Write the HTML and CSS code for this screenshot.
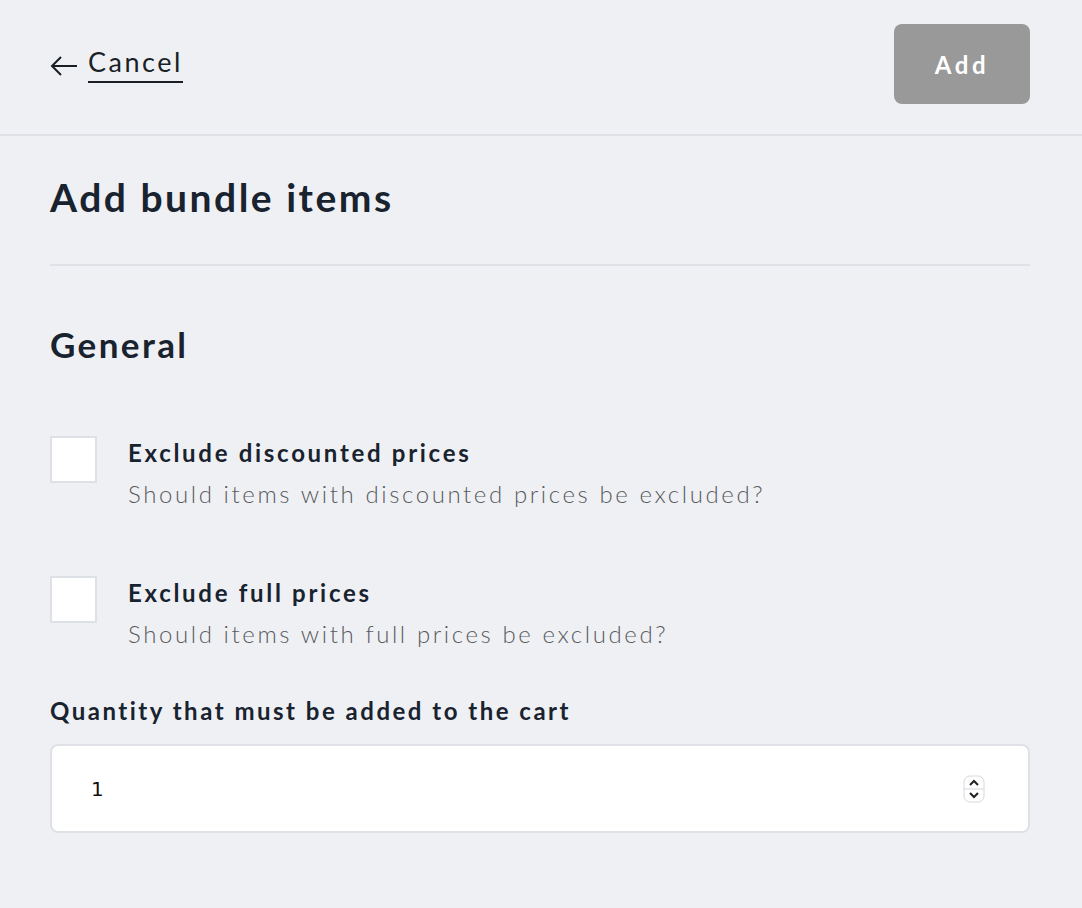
FILE: index.html
```html
<!DOCTYPE html>
<html>
<head>
  <title>Add bundle items</title>
  <meta name="viewport" content="width=device-width, initial-scale=1.0">
  <link rel="stylesheet" href="styles.css">
</head>
<body>
  <header class="top-bar">
    <a class="cancel" href="#">
      <svg class="cancel-arrow" width="28" height="20" viewBox="0 0 28 20">
        <path d="M27 10H2M11 1L2 10l9 9" fill="none" stroke="#1a1f26" stroke-width="2"/>
      </svg>
      <span class="cancel-text">Cancel</span>
    </a>
    <button class="add-btn" disabled>Add</button>
  </header>

  <main class="content">
    <h1 class="page-title">Add bundle items</h1>

    <section class="section">
      <h2 class="section-title">General</h2>

      <label class="check-row">
        <span class="check-box"></span>
        <span class="check-text">
          <span class="check-label">Exclude discounted prices</span>
          <span class="check-help">Should items with discounted prices be excluded?</span>
        </span>
      </label>

      <label class="check-row">
        <span class="check-box"></span>
        <span class="check-text">
          <span class="check-label">Exclude full prices</span>
          <span class="check-help">Should items with full prices be excluded?</span>
        </span>
      </label>

      <div class="field">
        <label class="field-label" for="quantity">Quantity that must be added to the cart</label>
        <div class="number-input">
          <input type="text" id="quantity" value="1">
          <span class="spinner">
            <svg width="22" height="28" viewBox="0 0 22 28">
              <rect x="1" y="1" width="20" height="26" rx="6" fill="#fff" stroke="#d6d8dd"/>
              <line x1="1" y1="14" x2="21" y2="14" stroke="#d6d8dd"/>
              <path d="M7 10l4-4 4 4M7 18l4 4 4-4" fill="none" stroke="#222" stroke-width="2"/>
            </svg>
          </span>
        </div>
      </div>
    </section>
  </main>
</body>
</html>
```

FILE: styles.css
```css
body {
  margin: 0;
  background-color: #eff0f4;
  color: #18232f;
  font-family: Lato, "Noto Sans", sans-serif;
}

.top-bar {
  display: flex;
  align-items: center;
  justify-content: space-between;
  height: 136px;
  padding: 0 52px 0 50px;
  border-bottom: 2px solid #dfe1e6;
  box-sizing: border-box;
}

.cancel {
  display: flex;
  align-items: center;
  gap: 10px;
  text-decoration: none;
  color: #1a1f26;
  margin-top: -6px;
}

.cancel-text {
  font-size: 27px;
  letter-spacing: 2.5px;
  padding-bottom: 3px;
  border-bottom: 2px solid #1a1f26;
}

.cancel-arrow {
  margin-top: 4px;
}

.add-btn {
  width: 136px;
  height: 80px;
  margin-top: -6px;
  border: none;
  border-radius: 8px;
  background-color: #999;
  color: #fff;
  font-family: Lato, "Noto Sans", sans-serif;
  font-size: 24px;
  font-weight: bold;
  letter-spacing: 3.6px;
  padding-left: 6px;
}

.content {
  padding: 0 52px 0 50px;
}

.page-title {
  margin: 0;
  padding: 38px 0 44px;
  font-size: 39px;
  font-weight: bold;
  letter-spacing: 2.5px;
  border-bottom: 2px solid #dfe1e6;
}

.section-title {
  margin: 57px 0 0;
  font-size: 35px;
  font-weight: bold;
  letter-spacing: 2.4px;
}

.check-row {
  display: flex;
  gap: 31px;
  margin-top: 69px;
}

.check-row + .check-row {
  margin-top: 66px;
}

.check-box {
  flex: none;
  width: 43px;
  height: 43px;
  margin-top: 2px;
  background: #fff;
  border: 2px solid #dde0e5;
}

.check-text {
  display: flex;
  flex-direction: column;
  gap: 12px;
  padding-top: 4px;
}

.check-label {
  font-size: 24px;
  font-weight: bold;
  letter-spacing: 2.7px;
}

.check-help {
  font-size: 24px;
  font-weight: 300;
  letter-spacing: 2.6px;
  color: #585b60;
}

.field {
  margin-top: 48px;
}

.field-label {
  display: block;
  font-size: 24px;
  font-weight: bold;
  letter-spacing: 2.5px;
}

.number-input {
  display: flex;
  align-items: center;
  margin-top: 19px;
  height: 89px;
  padding: 0 43px 0 37px;
  background: #fff;
  border: 2px solid #dfe1e6;
  border-radius: 8px;
  box-sizing: border-box;
}

.number-input input {
  flex: 1;
  border: none;
  outline: none;
  font-family: "DejaVu Sans", sans-serif;
  font-size: 20px;
  color: #111;
  background: transparent;
}

.spinner {
  display: flex;
}
```
